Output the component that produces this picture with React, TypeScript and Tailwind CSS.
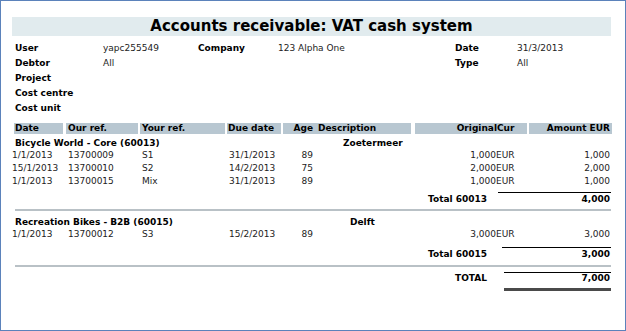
const ROWS1 = [
  { date: '1/1/2013', our: '13700009', your: 'S1', due: '31/1/2013', age: '89', orig: '1,000', amt: '1,000' },
  { date: '15/1/2013', our: '13700010', your: 'S2', due: '14/2/2013', age: '75', orig: '2,000', amt: '2,000' },
  { date: '1/1/2013', our: '13700015', your: 'Mix', due: '31/1/2013', age: '89', orig: '1,000', amt: '1,000' },
];

const ROWS2 = [
  { date: '1/1/2013', our: '13700012', your: 'S3', due: '15/2/2013', age: '89', orig: '3,000', amt: '3,000' },
];

type Row = (typeof ROWS1)[number];

function DataRow({ r }: { r: Row }) {
  return (
    <div className="flex h-[13px] leading-[13px] pl-[12px]">
      <span className="w-[56px]">{r.date}</span>
      <span className="w-[74px]">{r.our}</span>
      <span className="w-[87px]">{r.your}</span>
      <span className="w-[54px]">{r.due}</span>
      <span className="w-[30px] text-right">{r.age}</span>
      <span className="w-[113px]" />
      <span className="w-[70px] text-right">{r.orig}</span>
      <span className="w-[31px]">EUR</span>
      <span className="w-[83px] text-right">{r.amt}</span>
    </div>
  );
}

function GroupHead({ name, city, cityAt }: { name: string; city: string; cityAt: string }) {
  return (
    <div className="flex h-[12px] leading-[12px] pl-[15px] font-bold text-black">
      <span className={cityAt}>{name}</span>
      <span>{city}</span>
    </div>
  );
}

function Subtotal({ label, value, lineAt }: { label: string; value: string; lineAt: string }) {
  return (
    <>
      <div className={`h-px bg-black ${lineAt} mr-[15px]`} />
      <div className="flex h-[12px] leading-[12px] font-bold text-black">
        <span className="ml-[428px] w-[100px]">{label}</span>
        <span className="w-[82px] text-right">{value}</span>
      </div>
    </>
  );
}

function Label({ text, w }: { text: string; w: string }) {
  return <span className={`font-bold text-black ${w}`}>{text}</span>;
}

export default function App() {
  return (
    <div className="w-[626px] h-[331px] bg-white shadow-[inset_0_0_0_1px_#5b82bb] overflow-hidden font-['DejaVu_Sans',sans-serif] text-[9px] text-[#222]">
      <div className="h-[17px]" />
      <div className="ml-[12px] w-[599px] h-[19px] bg-[#e1ebee] text-center font-bold text-[15px] leading-[19px] text-black">
        Accounts receivable: VAT cash system
      </div>

      {/* report parameters */}
      <div className="mt-[5px] pl-[15px] leading-[15px]">
        <div className="flex h-[15px]">
          <Label text="User" w="w-[88px]" />
          <span className="w-[95px]">yapc255549</span>
          <Label text="Company" w="w-[80px]" />
          <span className="w-[177px]">123 Alpha One</span>
          <Label text="Date" w="w-[62px]" />
          <span>31/3/2013</span>
        </div>
        <div className="flex h-[15px]">
          <Label text="Debtor" w="w-[88px]" />
          <span className="w-[352px]">All</span>
          <Label text="Type" w="w-[62px]" />
          <span>All</span>
        </div>
        <div className="flex h-[15px]">
          <Label text="Project" w="w-[88px]" />
        </div>
        <div className="flex h-[15px]">
          <Label text="Cost centre" w="w-[88px]" />
        </div>
        <div className="flex h-[15px]">
          <Label text="Cost unit" w="w-[88px]" />
        </div>
      </div>

      {/* column headers */}
      <div className="mt-[7px] flex h-[11px] leading-[11px] pl-[14px] font-bold text-black">
        <div className="w-[49px] bg-[#b8c7d1] pl-[1px]">Date</div>
        <div className="ml-[3px] w-[72px] bg-[#b8c7d1] pl-[2px]">Our ref.</div>
        <div className="ml-[2px] w-[85px] bg-[#b8c7d1] pl-[2px]">Your ref.</div>
        <div className="ml-[2px] w-[54px] bg-[#b8c7d1] pl-[1px]">Due date</div>
        <div className="ml-[2px] w-[33px] bg-[#b8c7d1] pr-[3px] text-right">Age</div>
        <div className="w-[95px] bg-[#b8c7d1] pl-[2px]">Description</div>
        <div className="ml-[4px] w-[112px] bg-[#b8c7d1] flex">
          <span className="w-[82px] text-right">Original</span>
          <span>Cur</span>
        </div>
        <div className="ml-[2px] w-[83px] bg-[#b8c7d1] pr-[2px] text-right">Amount EUR</div>
      </div>

      <div className="mt-[3px]">
        <GroupHead name="Bicycle World - Core (60013)" city="Zoetermeer" cityAt="w-[328px]" />
        {ROWS1.map((r, i) => (
          <DataRow key={i} r={r} />
        ))}
        <div className="h-[4px]" />
        <Subtotal label="Total 60013" value="4,000" lineAt="ml-[498px]" />
        <div className="mt-[4px] ml-[15px] w-[596px] h-[2px] bg-[#b9c1c6]" />

        <div className="h-[5px]" />
        <GroupHead name="Recreation Bikes - B2B (60015)" city="Delft" cityAt="w-[335px]" />
        {ROWS2.map((r, i) => (
          <DataRow key={i} r={r} />
        ))}
        <div className="h-[6px]" />
        <Subtotal label="Total 60015" value="3,000" lineAt="ml-[502px]" />
        <div className="mt-[5px] ml-[15px] w-[596px] h-[2px] bg-[#b9c1c6]" />

        <div className="mt-[5px] ml-[504px] w-[107px] h-px bg-black" />
        <div className="flex h-[11px] leading-[11px] font-bold text-black">
          <span className="ml-[455px] w-[73px]">TOTAL</span>
          <span className="w-[82px] text-right">7,000</span>
        </div>
        <div className="mt-[4px] ml-[504px] w-[107px] h-[3px] bg-[#4a4a4a]" />
      </div>
    </div>
  );
}
